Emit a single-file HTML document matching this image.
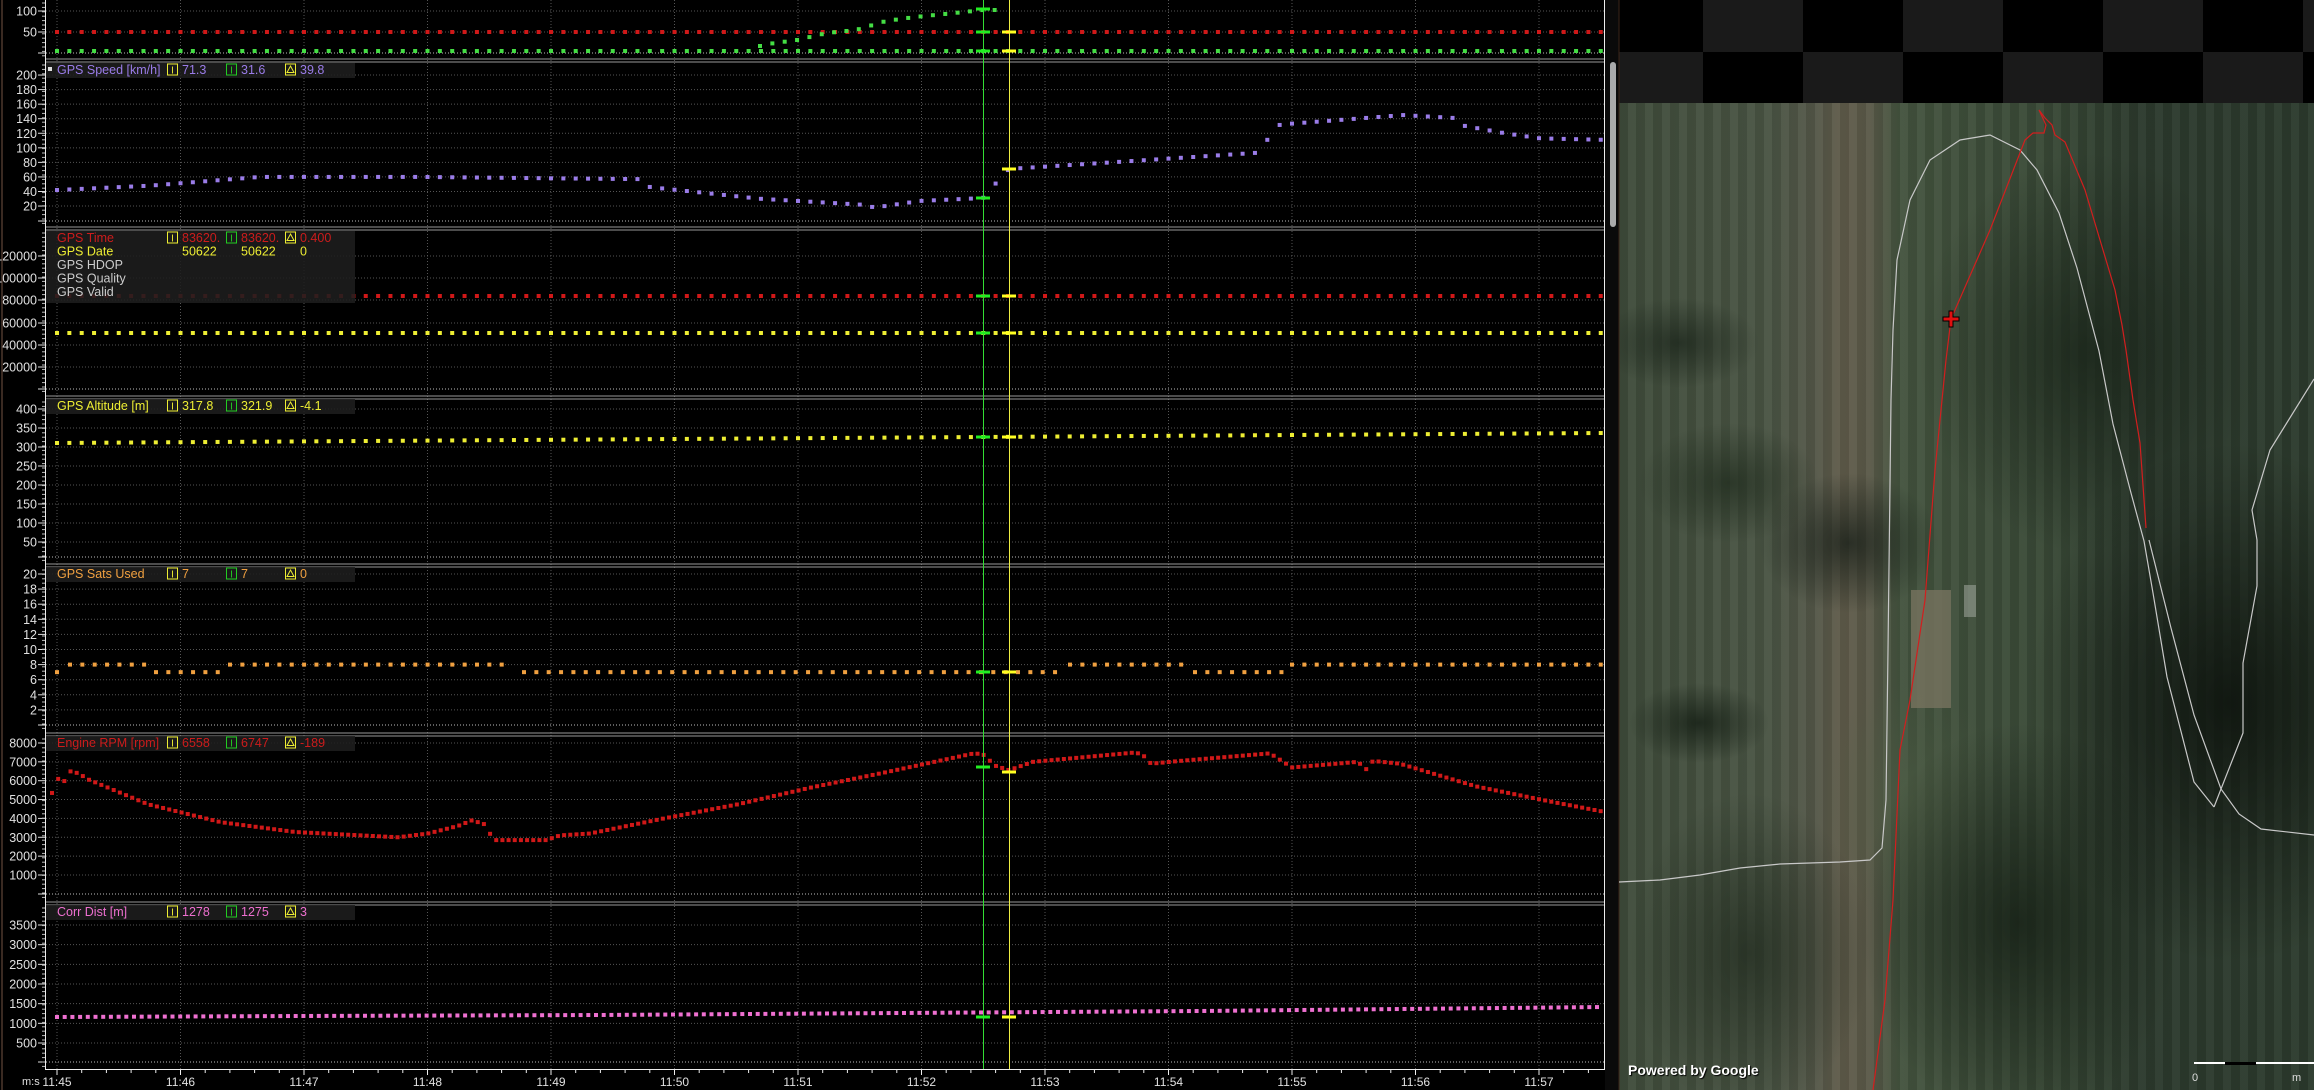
<!DOCTYPE html>
<html><head><meta charset="utf-8"><style>
html,body{margin:0;padding:0;background:#000;width:2314px;height:1090px;overflow:hidden}
#wrap{position:relative;width:2314px;height:1090px}
svg{position:absolute;left:0;top:0}
#map{position:absolute;left:1619px;top:103px;width:695px;height:987px;overflow:hidden;
background:
radial-gradient(ellipse 70px 40px at 80px 620px,rgba(20,30,20,.8) 0%,rgba(0,0,0,0) 100%),
radial-gradient(ellipse 80px 45px at 60px 240px,rgba(25,35,25,.7) 0%,rgba(0,0,0,0) 100%),
radial-gradient(ellipse 90px 60px at 110px 380px,rgba(30,42,28,.7) 0%,rgba(0,0,0,0) 100%),
radial-gradient(ellipse 90px 70px at 230px 440px,rgba(18,26,20,.7) 0%,rgba(0,0,0,0) 100%),
radial-gradient(ellipse 200px 260px at 610px 600px,rgba(14,20,14,.9) 0%,rgba(0,0,0,0) 100%),
radial-gradient(ellipse 170px 200px at 470px 250px,rgba(25,36,25,.8) 0%,rgba(0,0,0,0) 100%),
radial-gradient(ellipse 160px 200px at 400px 820px,rgba(20,30,20,.8) 0%,rgba(0,0,0,0) 100%),
radial-gradient(ellipse 120px 160px at 130px 850px,rgba(30,40,28,.7) 0%,rgba(0,0,0,0) 100%),
radial-gradient(ellipse 90px 120px at 290px 700px,rgba(80,95,70,.5) 0%,rgba(0,0,0,0) 100%),
repeating-linear-gradient(90deg,rgba(0,0,0,.08) 0 9px,rgba(255,255,255,.03) 9px 17px),
linear-gradient(90deg,#3f4c3b 0px,#4a5544 150px,#555849 196px,#605c4b 222px,#5b5a49 250px,#44543f 280px,#3a4a37 420px,#2c3a2d 520px,#2c3b2d 695px);}
.bld{position:absolute;left:292px;top:487px;width:40px;height:118px;background:#77735f;opacity:.8}
.bld2{position:absolute;left:345px;top:482px;width:12px;height:32px;background:#9aa096;opacity:.6}
.pg{position:absolute;left:1628px;top:1062px;font:bold 14px "Liberation Sans",sans-serif;color:#fff;text-shadow:1px 1px 1px #000}
</style></head><body><div id="wrap">
<div style="position:absolute;left:1619px;top:0;width:695px;height:103px;background:
linear-gradient(90deg,#000 0 84px,#1a1a1a 84px 184px,#000 184px 284px,#1a1a1a 284px 384px,#000 384px 484px,#1a1a1a 484px 584px,#000 584px 684px,#1a1a1a 684px) 0 0/695px 52px no-repeat,
linear-gradient(90deg,#1a1a1a 0 84px,#000 84px 184px,#1a1a1a 184px 284px,#000 284px 384px,#1a1a1a 384px 484px,#000 484px 584px,#1a1a1a 584px 684px,#000 684px) 0 52px/695px 51px no-repeat"></div>
<div id="map"><div class="bld"></div><div class="bld2"></div></div>
<svg width="2314" height="1090" id="s" xmlns="http://www.w3.org/2000/svg">
<rect x="1605" y="0" width="14" height="1090" fill="#0a0a0a"/>
<rect x="1610" y="62" width="6" height="165" rx="3" fill="#aaa"/>
<line x1="2" y1="0" x2="2" y2="1090" stroke="#3a2a22" stroke-width="2"/>
<line x1="1619" y1="0" x2="1619" y2="1090" stroke="#3a2418" stroke-width="1"/>
<g fill="none" stroke-width="1.2">
<polyline stroke="#c8c8c8" points="1619,882 1660,880 1700,875 1740,868 1780,864 1840,862 1870,860 1882,848 1886,800 1888,650 1891,400 1893,330 1897,260 1910,200 1930,160 1960,140 1990,135 2020,150 2037,170 2059,213 2077,268 2099,351 2113,424 2131,493 2144,541 2153,593 2167,677 2194,782 2214,807"/>
<polyline stroke="#c8c8c8" points="2149,540 2171,628 2194,715 2221,789 2239,814 2261,829 2314,835"/>
<polyline stroke="#c8c8c8" points="2214,807 2221,789 2243,733 2243,663 2257,586 2257,540 2252,510 2270,450 2314,379"/>
<polyline stroke="#d21e1e" points="1873,1090 1885,1000 1893,900 1900,750 1910,700 1925,600 1935,470 1946,360 1951,319 1955,310 1990,230 2025,140 2033,133 2044,133 2046,125 2039,110 2045,118 2052,125 2055,135 2065,142 2085,190 2100,240 2115,290 2122,325 2126,350 2133,400 2140,443 2146,528"/>
</g>
<g transform="translate(1951,319)"><path d="M-2,-8h4v6h6v4h-6v6h-4v-6h-6v-4h6z" fill="#e01010" stroke="#000" stroke-width="1"/></g>
<g id="chart" font-family="Liberation Sans, sans-serif"></g>
<g stroke="#fff" stroke-width="2"><line x1="2194" y1="1063" x2="2314" y2="1063"/></g>
<rect x="2225" y="1062" width="31" height="3" fill="#000"/>
<text x="2192" y="1081" fill="#ddd" font-size="11" font-family="Liberation Sans, sans-serif">0</text>
<text x="2292" y="1081" fill="#ddd" font-size="11" font-family="Liberation Sans, sans-serif">m</text>
</svg>
<div class="pg">Powered by Google</div>
</div>
<script>
var NS="http://www.w3.org/2000/svg",G=document.getElementById("chart");
function el(t,a,txt){var e=document.createElementNS(NS,t);for(var k in a)e.setAttribute(k,a[k]);if(txt!=null)e.textContent=txt;G.appendChild(e);return e;}
var X0=57,M=123.5,XR=1604;
for(var m=0;m<=12;m++){var x=X0+m*M;el("line",{x1:x,y1:0,x2:x,y2:1069,stroke:"#555","stroke-dasharray":"1 2"});}
var panels=[
 {top:-100,bot:58,ticks:[[100,11],[50,32],["",53]]},
 {top:62,bot:226,ticks:[]},
 {top:230,bot:395,ticks:[]},
 {top:399,bot:563,ticks:[]},
 {top:567,bot:732,ticks:[]},
 {top:736,bot:901,ticks:[]},
 {top:905,bot:1069,ticks:[]}];
for(var v=200;v>=20;v-=20)panels[1].ticks.push([v,220.6-v*0.7278]);
panels[1].ticks.push(["",221]);
[[120000,256],[100000,278],[80000,300],[60000,323],[40000,345],[20000,367],["",389]].forEach(function(t){panels[2].ticks.push(t)});
for(var v=400;v>=50;v-=50)panels[3].ticks.push([v,409+(400-v)*0.38]);panels[3].ticks.push(["",557]);
for(var v=20;v>=2;v-=2)panels[4].ticks.push([v,574+(20-v)*7.55]);panels[4].ticks.push(["",725]);
for(var v=8000;v>=1000;v-=1000)panels[5].ticks.push([v,875-(v-1000)*0.01886]);panels[5].ticks.push(["",894]);
for(var v=3500;v>=500;v-=500)panels[6].ticks.push([v,1043-(v-500)*0.03933]);panels[6].ticks.push(["",1062]);
panels.forEach(function(p,i){
 p.ticks.forEach(function(t){
  el("line",{x1:46,y1:t[1],x2:XR,y2:t[1],stroke:t[0]===""?"#bbb":"#555","stroke-dasharray":"1 2"});
  el("line",{x1:38,y1:t[1],x2:46,y2:t[1],stroke:"#ddd"});
  if(t[0]!=="")el("text",{x:37,y:t[1]+4.5,fill:"#e0e0e0","font-size":"12.5","text-anchor":"end"},t[0]);
 });
 for(var y=Math.max(p.top,0)+3;y<p.bot;y+=4.4)el("line",{x1:42,y1:y,x2:46,y2:y,stroke:"#bbb"});
 if(i>0){el("line",{x1:46,y1:p.top-3,x2:XR,y2:p.top-3,stroke:"#999"});el("line",{x1:46,y1:p.top,x2:XR,y2:p.top,stroke:"#999"});}
});
el("line",{x1:45.5,y1:0,x2:45.5,y2:1070,stroke:"#eee"});
el("line",{x1:XR+.5,y1:0,x2:XR+.5,y2:1070,stroke:"#eee"});
el("line",{x1:45,y1:1069.5,x2:XR,y2:1069.5,stroke:"#eee"});
for(var m=0;m<=12;m++){var x=X0+m*M;el("line",{x1:x,y1:1069,x2:x,y2:1075,stroke:"#eee"});
 for(var k=1;k<5&&x+k*M/5<XR;k++)el("line",{x1:x+k*M/5,y1:1069,x2:x+k*M/5,y2:1073,stroke:"#eee"});
 el("text",{x:x,y:1086,fill:"#e0e0e0","font-size":"12","text-anchor":"middle"},"11:"+(45+m));}
el("text",{x:22,y:1085,fill:"#e0e0e0","font-size":"11"},"m:s");
function interp(pts,x){if(x<=pts[0][0])return pts[0][1];for(var i=1;i<pts.length;i++){if(x<=pts[i][0]){var a=pts[i-1],b=pts[i];return a[1]+(b[1]-a[1])*(x-a[0])/(b[0]-a[0]);}}return pts[pts.length-1][1];}
function ser(pts,step,col,x0,x1,w,h){for(var x=x0;x<=x1;x+=step){var y=interp(pts,x);el("rect",{x:x-w/2,y:y-h/2,width:w,height:h,fill:col});}}
ser([[0,32],[2000,32]],12.35,"#d01818",X0,XR,4,4);
ser([[0,51],[2000,51]],12.35,"#44dd44",X0,XR,4,4);
ser([[760,46],[768,44],[797,40],[827,33],[856,30],[886,21],[915,17],[945,14],[983,10],[995,10]],12.35,"#44dd44",760,996,4,4);
var sp=[[57,42],[150,48],[260,60],[420,60],[560,58],[640,57],[650,46],[760,30],[860,22],[875,18],[920,27],[983,31],[995,50],[1009,71],[1100,79],[1200,88],[1255,93],[1268,112],[1280,132],[1375,142],[1403,145],[1454,141],[1465,130],[1505,120],[1540,113],[1604,111]];
ser(sp.map(function(p){return [p[0],220.6-p[1]*0.7278]}),12.35,"#9a7ce8",X0,XR,4,4);
ser([[0,296],[2000,296]],12.35,"#d01818",X0,XR,4,4);
ser([[0,333],[2000,333]],12.35,"#eeee33",X0,XR,4,4);
ser([[57,443],[983,437],[1604,433]],12.35,"#eeee33",X0,XR,4,4);
var segs=[[57,58,7],[70,145,8],[156,219,7],[230,512,8],[524,1062,7],[1070,1182,8],[1195,1286,7],[1292,1604,8]];
segs.forEach(function(s){for(var x=s[0];x<=s[1];x+=12.35){var y=574+(20-s[2])*7.55;el("rect",{x:x-2,y:y-2,width:4,height:4,fill:"#f0a040"});}});
var rp=[[52,5350],[58,6100],[64,5950],[70,6500],[78,6400],[89,6050],[148,4750],[221,3800],[295,3280],[398,3000],[428,3200],[458,3600],[472,3900],[484,3700],[494,2850],[546,2850],[560,3100],[590,3200],[664,4000],[738,4750],[812,5650],[886,6450],[974,7450],[983,7400],[995,6800],[1009,6558],[1033,7000],[1136,7500],[1144,7300],[1151,6900],[1180,7050],[1270,7450],[1292,6700],[1358,7000],[1366,6600],[1373,7050],[1400,6900],[1476,5700],[1550,4900],[1604,4350]];
ser(rp.map(function(p){return [p[0],875-(p[1]-1000)*0.01886]}),6.17,"#d01818",52,XR,4,4);
ser([[57,1017],[300,1016],[600,1015],[900,1013],[1200,1011],[1604,1007]],7.7,"#ee70d0",X0,XR,4,4);
el("line",{x1:983.5,y1:0,x2:983.5,y2:1069,stroke:"#33dd33"});
el("line",{x1:1009.5,y1:0,x2:1009.5,y2:1069,stroke:"#eeee44"});
[9,32,51,198,296,333,437,672,767,1017].forEach(function(y){el("rect",{x:976,y:y-1.5,width:14,height:3,fill:"#22ee22"})});
[32,51,169,296,333,437,672,772,1017].forEach(function(y){el("rect",{x:1002,y:y-1.5,width:14,height:3,fill:"#ffff22"})});
function hdr(top,rows,h){el("rect",{x:46,y:top+1,width:309,height:h,fill:"#1e1e1e","fill-opacity":"0.88"});
 rows.forEach(function(r,i){var y=top+12+i*13.5;el("text",{x:57,y:y,fill:r[1],"font-size":"12.5"},r[0]);
  if(r[2]!=null){
   el("rect",{x:167.5,y:y-10,width:10,height:11,fill:"none",stroke:"#eeee33"});el("text",{x:172.5,y:y-0.5,fill:"#eeee33","font-size":"10","text-anchor":"middle"},"I");
   el("rect",{x:226.5,y:y-10,width:10,height:11,fill:"none",stroke:"#22cc22"});el("text",{x:231.5,y:y-0.5,fill:"#22cc22","font-size":"10","text-anchor":"middle"},"I");
   el("rect",{x:285.5,y:y-10,width:10,height:11,fill:"none",stroke:"#eeee33"});el("path",{d:"M290.5,"+(y-8)+"L294,"+(y-1.5)+"H287Z",fill:"none",stroke:"#eeee33"});}
  if(r[2]!=null&&r[2]!==""){el("text",{x:182,y:y,fill:r[1],"font-size":"12.5"},r[2]);el("text",{x:241,y:y,fill:r[1],"font-size":"12.5"},r[3]);el("text",{x:300,y:y,fill:r[1],"font-size":"12.5"},r[4]);}
  if(r[5]){el("text",{x:182,y:y,fill:r[1],"font-size":"12.5"},r[5][0]);el("text",{x:241,y:y,fill:r[1],"font-size":"12.5"},r[5][1]);el("text",{x:300,y:y,fill:r[1],"font-size":"12.5"},r[5][2]);}
 });}
hdr(62,[["GPS Speed [km/h]","#9a7ce8","71.3","31.6","39.8"]],15);
el("rect",{x:48,y:67,width:4,height:4,fill:"#ddd"});
hdr(230,[["GPS Time","#cc1c1c","83620.","83620.","0.400"],["GPS Date","#eeee33",null,null,null,["50622","50622","0"]],["GPS HDOP","#ccc"],["GPS Quality","#ccc"],["GPS Valid","#ccc"]],72);
hdr(398,[["GPS Altitude [m]","#eeee33","317.8","321.9","-4.1"]],15);
hdr(566,[["GPS Sats Used","#f0a040","7","7","0"]],15);
hdr(735,[["Engine RPM [rpm]","#cc1c1c","6558","6747","-189"]],15);
hdr(904,[["Corr Dist [m]","#ee70d0","1278","1275","3"]],15);
</script>
</body></html>
